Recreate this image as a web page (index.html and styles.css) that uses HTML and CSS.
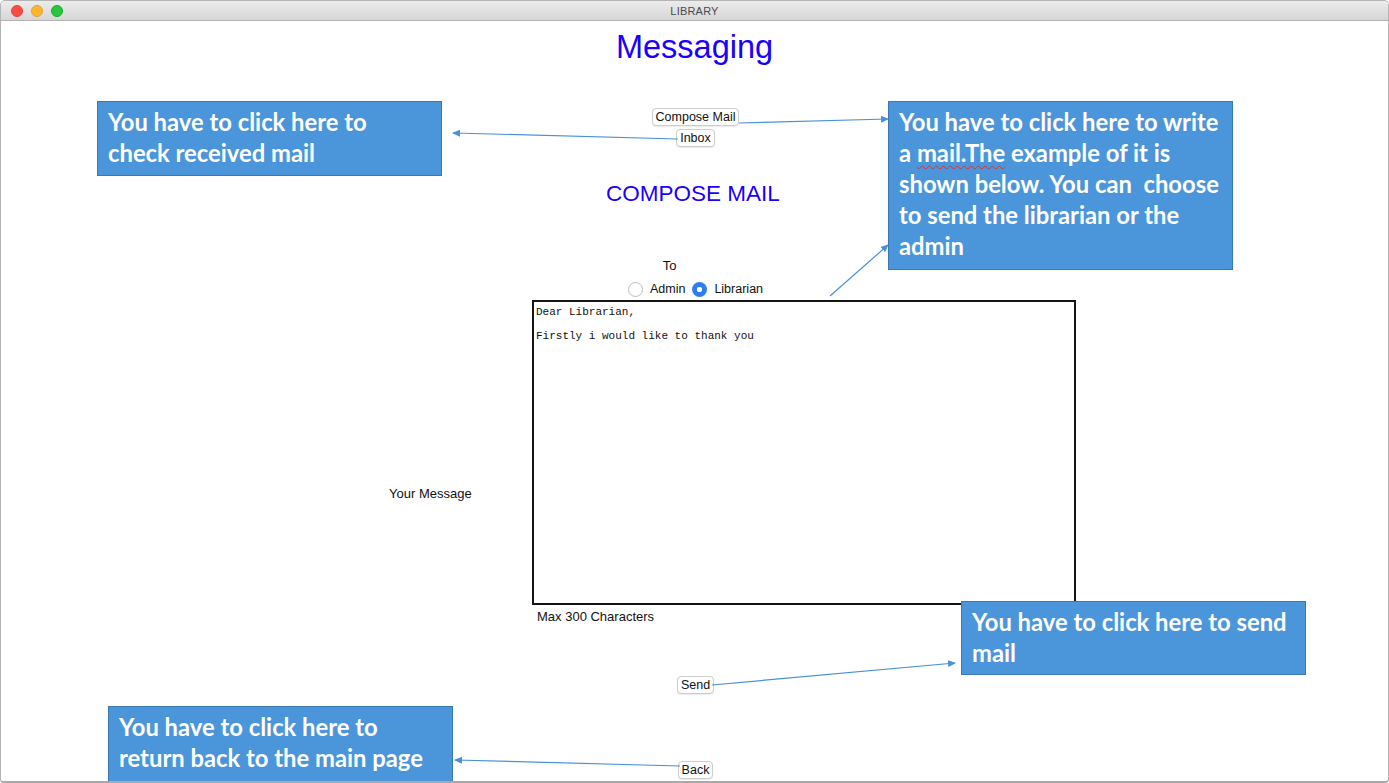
FILE: index.html
```html
<!DOCTYPE html>
<html lang="en">
<head>
    <meta charset="UTF-8">
    <meta name="viewport" content="width=device-width, initial-scale=1.0">
    <title>LIBRARY</title>
    <link rel="stylesheet" href="styles.css">
</head>

<body>
    <div class="window">
        <header class="titlebar">
            <div class="lights">
                <span class="light red"></span>
                <span class="light yellow"></span>
                <span class="light green"></span>
            </div>
            <div class="title">LIBRARY</div>
        </header>

        <main class="content">
            <h1 class="heading">Messaging</h1>

            <div class="nav-buttons">
                <button class="mac-btn">Compose Mail</button>
                <button class="mac-btn">Inbox</button>
            </div>

            <h2 class="subheading">COMPOSE MAIL</h2>

            <div class="to-label">To</div>
            <div class="radio-row">
                <label class="radio"><span class="radio-dot"></span>Admin</label>
                <label class="radio"><span class="radio-dot checked"></span>Librarian</label>
            </div>

            <div class="message-row">
                <label class="message-label" for="message">Your Message</label>
                <textarea class="message-box" id="message" spellcheck="false">Dear Librarian,

Firstly i would like to thank you</textarea>
                <div class="char-limit">Max 300 Characters</div>
            </div>

            <button class="mac-btn send-btn">Send</button>
            <button class="mac-btn back-btn">Back</button>
        </main>

        <!-- tutorial annotations drawn over the window -->
        <svg class="arrows" width="1389" height="783" viewBox="0 0 1389 783">
            <defs>
                <marker id="head" markerWidth="8" markerHeight="8" refX="7" refY="4" orient="auto" markerUnits="userSpaceOnUse">
                    <path d="M0,0.5 L8,4 L0,7.5 Z" fill="#4a90d9"/>
                </marker>
            </defs>
            <line x1="678" y1="139" x2="453" y2="133" marker-end="url(#head)"/>
            <line x1="739" y1="123" x2="888" y2="119" marker-end="url(#head)"/>
            <line x1="830" y1="296" x2="888" y2="245" marker-end="url(#head)"/>
            <line x1="712" y1="685" x2="955" y2="663" marker-end="url(#head)"/>
            <line x1="680" y1="766" x2="455" y2="760" marker-end="url(#head)"/>
        </svg>

        <div class="callout callout-inbox">You have to click here to<br>check received mail</div>
        <div class="callout callout-compose">You have to click here to write<br>a <span class="squiggle">mail.The</span> example of it is<br>shown below. You can&nbsp; choose<br>to send the librarian or the<br>admin</div>
        <div class="callout callout-send">You have to click here to send<br>mail</div>
        <div class="callout callout-back">You have to click here to<br>return back to the main page</div>
    </div>
</body>
</html>
```

FILE: styles.css
```css
/* General Styles */
* {
    margin: 0;
    padding: 0;
    box-sizing: border-box;
}

html, body {
    width: 1389px;
    height: 783px;
    background: #ffffff;
    font-family: 'Liberation Sans', Arial, sans-serif;
    color: #111;
    overflow: hidden;
}

.window {
    position: relative;
    width: 1389px;
    height: 783px;
    border: 1px solid #b4b4b4;
    border-bottom: 2px solid #a9a9a9;
    border-radius: 5px 5px 4px 4px;
    overflow: hidden;
    background: #fff;
}

/* Title bar */
.titlebar {
    position: relative;
    height: 20px;
    background: linear-gradient(#ececec, #d6d6d6);
    border-bottom: 1px solid #b3b3b3;
    display: flex;
    align-items: center;
    justify-content: center;
}

.lights {
    position: absolute;
    left: 10px;
    top: 4px;
    display: flex;
    gap: 8px;
}

.light {
    width: 12px;
    height: 12px;
    border-radius: 50%;
}

.light.red { background: #fc4b44; border: 1px solid #e0443e; }
.light.yellow { background: #fdb52d; border: 1px solid #dea236; }
.light.green { background: #27c63c; border: 1px solid #1aab29; }

.title {
    font-size: 11px;
    color: #4a4a4a;
    letter-spacing: 0.2px;
}

/* Main form */
.content {
    display: flex;
    flex-direction: column;
    align-items: center;
    padding-left: 2px;
}

.heading {
    margin-top: 8px;
    margin-right: 2px;
    font-size: 32.5px;
    line-height: 36px;
    font-weight: normal;
    color: #1a00ff;
}

.nav-buttons {
    margin-top: 43px;
    display: flex;
    flex-direction: column;
    align-items: center;
    gap: 3px;
}

.mac-btn {
    height: 18px;
    padding: 0 3px;
    font-family: 'Liberation Sans', Arial, sans-serif;
    font-size: 12.5px;
    color: #111;
    background: #fff;
    border: 1px solid #cdcdcd;
    border-radius: 4px;
    box-shadow: 0 1px 1px rgba(0, 0, 0, 0.08);
    cursor: pointer;
}

.subheading {
    margin-top: 34px;
    font-size: 22.5px;
    line-height: 26px;
    font-weight: normal;
    color: #1a00ff;
    margin-right: 5px;
}

.to-label {
    margin-top: 51px;
    margin-right: 52px;
    font-size: 13px;
    line-height: 16px;
}

.radio-row {
    margin-top: 7px;
    display: flex;
    gap: 7px;
    font-size: 12.5px;
    line-height: 16px;
}

.radio {
    display: flex;
    align-items: center;
    gap: 7px;
}

.radio-dot {
    width: 15px;
    height: 15px;
    border-radius: 50%;
    border: 1px solid #bdbdbd;
    background: #fff;
}

.radio-dot.checked {
    border: none;
    background: radial-gradient(circle, #fff 0 2.5px, #2f7cf6 3px);
}

.message-row {
    margin-top: 3px;
    align-self: flex-start;
    margin-left: 386px;
    display: grid;
    grid-template-columns: 143px 544px;
    row-gap: 4px;
}

.message-label {
    font-size: 13px;
    line-height: 16px;
    margin-top: 186px;
}

.message-box {
    width: 544px;
    height: 305px;
    padding: 4px 2px;
    border: 2px solid #151515;
    font-family: 'Liberation Mono', 'Courier New', monospace;
    font-size: 11px;
    line-height: 12px;
    color: #111;
    resize: none;
    outline: none;
    overflow: hidden;
}

.char-limit {
    grid-column: 2;
    padding-left: 5px;
    font-size: 13px;
    line-height: 16px;
}

.send-btn {
    margin-top: 51px;
}

.back-btn {
    margin-top: 67px;
}

/* Annotations */
.arrows {
    position: absolute;
    top: -1px;
    left: -1px;
    pointer-events: none;
}

.arrows line {
    stroke: #4a90d9;
    stroke-width: 1.2;
}

.callout {
    position: absolute;
    width: 345px;
    padding: 5px 10px;
    background: #4b95da;
    border: 1px solid #3a78b4;
    color: #fff;
    font-family: 'Lato', 'Open Sans', sans-serif;
    font-weight: bold;
    font-size: 23.8px;
    line-height: 31px;
}

.callout-inbox { left: 96px; top: 100px; height: 75px; }
.callout-compose { left: 887px; top: 100px; height: 169px; }
.callout-send { left: 960px; top: 600px; height: 74px; }
.callout-back { left: 107px; top: 705px; height: 80px; }

.squiggle {
    text-decoration: underline wavy #e0312f;
    text-decoration-thickness: 1px;
    text-underline-offset: 3px;
}
```
